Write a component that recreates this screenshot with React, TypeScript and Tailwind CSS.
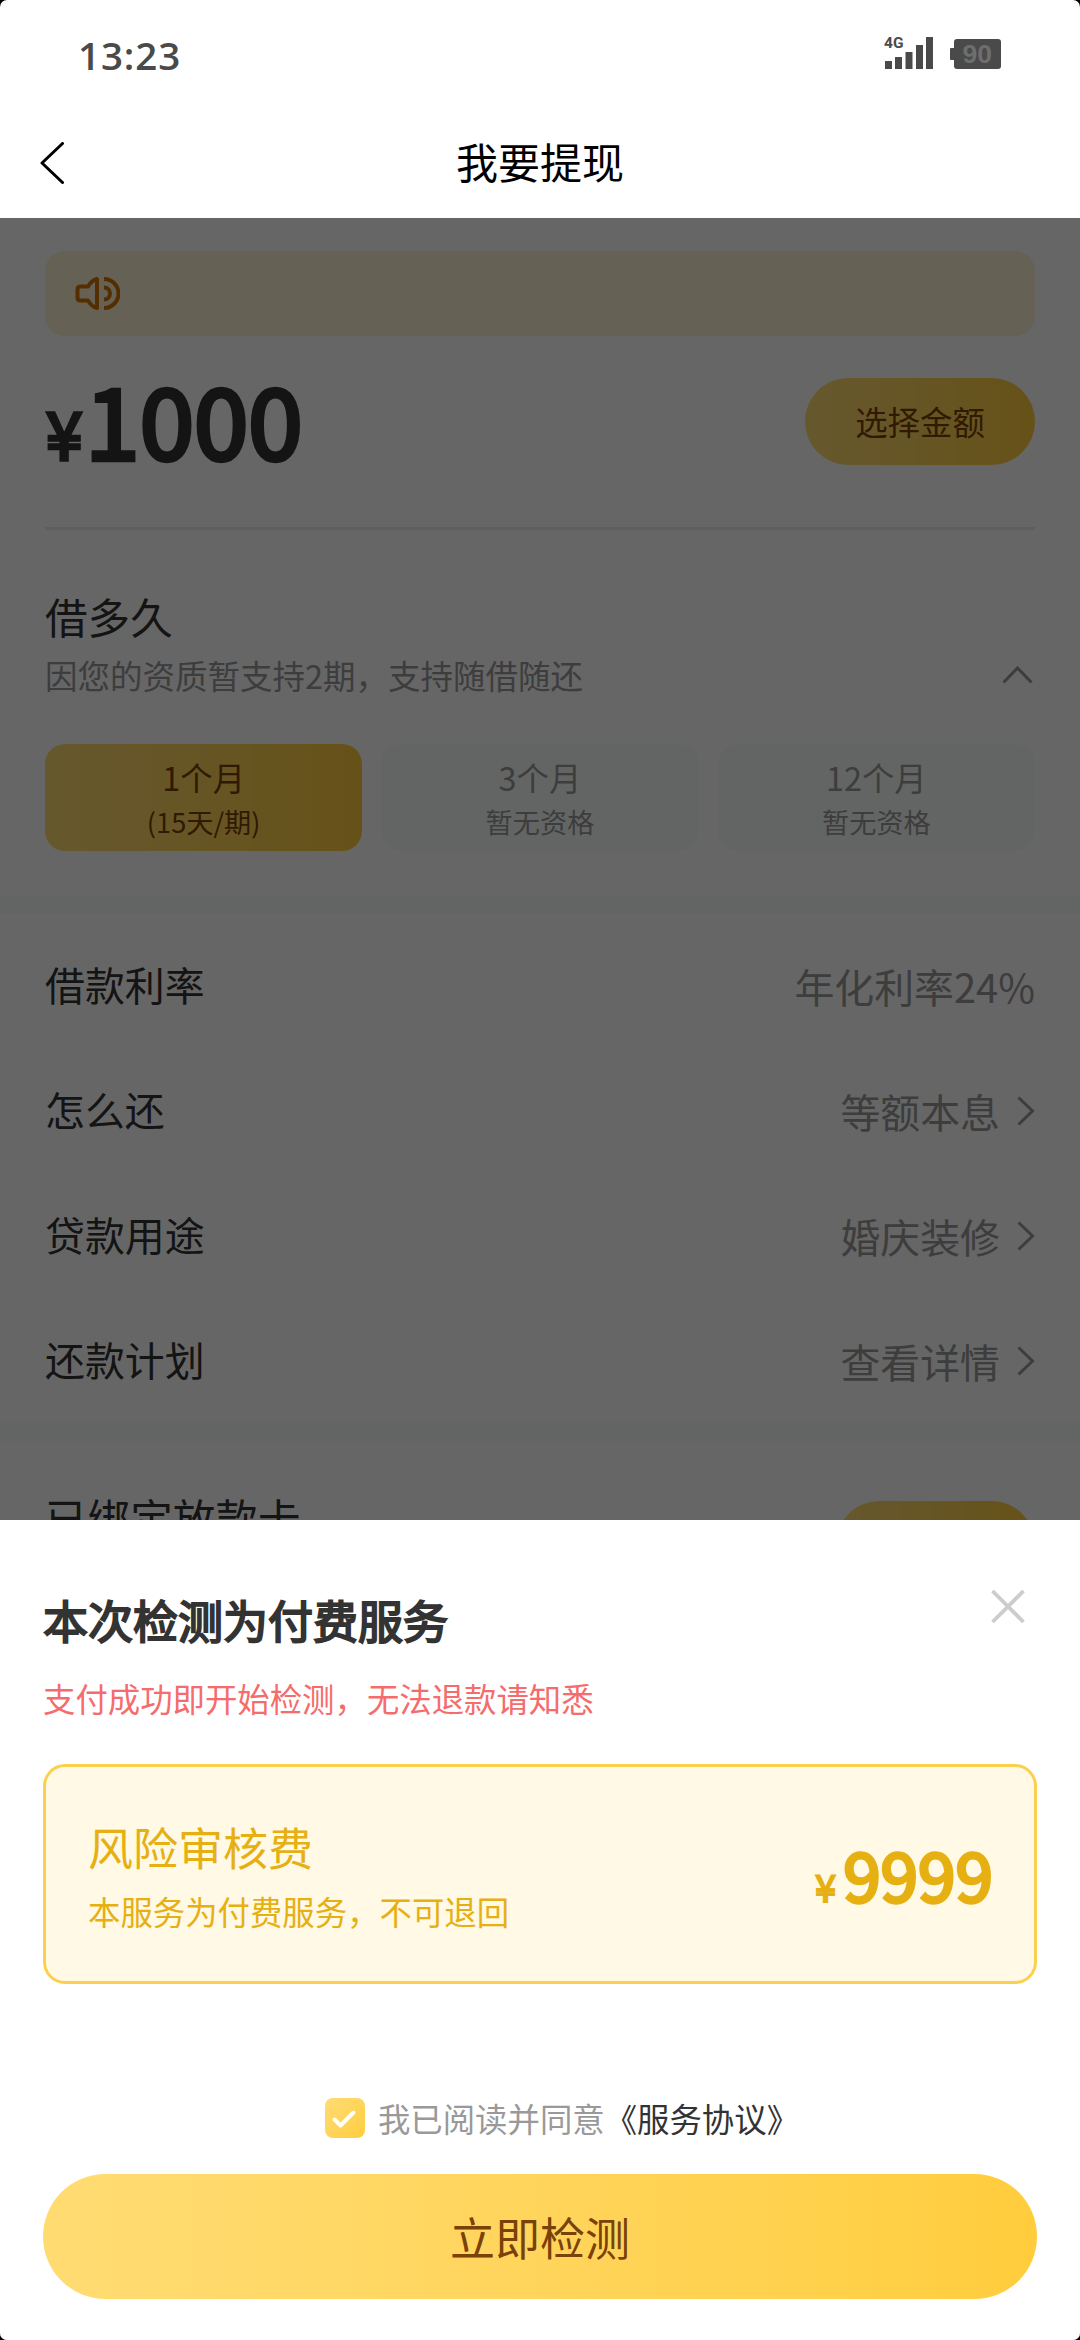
import { clsx } from "clsx";

const terms = [
  { title: "1个月", note: "(15天/期)", active: true },
  { title: "3个月", note: "暂无资格", active: false },
  { title: "12个月", note: "暂无资格", active: false },
];

const rows = [
  { label: "借款利率", value: "年化利率24%", link: false },
  { label: "怎么还", value: "等额本息", link: true },
  { label: "贷款用途", value: "婚庆装修", link: true },
  { label: "还款计划", value: "查看详情", link: true },
];

function StatusBar() {
  return (
    <div className="flex h-[108px] items-start justify-between pl-[78px] pr-[79px]">
      <span className="mt-[30px] font-['Open_Sans',sans-serif] text-[38.500px] font-semibold leading-[50px] tracking-[0.900px] text-[#4a4a4a]">
        13:23
      </span>
      <svg className="mt-[34px]" width="117" height="38" viewBox="0 0 117 38" fill="#4a4a4a">
        <text x="0" y="14" fontSize="15.500" fontWeight="700" fontFamily="Roboto, sans-serif">4G</text>
        <rect x="1" y="27" width="7" height="8" />
        <rect x="11" y="23" width="7" height="12" />
        <rect x="21.500" y="18" width="7" height="17" />
        <rect x="32" y="11" width="7" height="24" />
        <rect x="42" y="3" width="7" height="32" />
        <rect x="66" y="14" width="6" height="12" rx="1" />
        <rect x="70" y="5" width="47" height="30" rx="3" />
        <text x="78.500" y="29" fontSize="26.500" fontWeight="700" fill="#6e6e6e" fontFamily="Liberation Sans, sans-serif">90</text>
      </svg>
    </div>
  );
}

function NavBar() {
  return (
    <div className="flex h-[110px] items-center">
      <svg className="ml-10 w-6" width="24" height="42" viewBox="0 0 24 42" fill="none" stroke="#000" strokeWidth="3" strokeLinecap="round" strokeLinejoin="round">
        <path d="M22.500 1.500 2 21l20.500 19.500" />
      </svg>
      <h1 className="mr-16 flex-1 pb-[5px] text-center text-[42px] text-black">我要提现</h1>
    </div>
  );
}

function Chevron() {
  return (
    <svg width="18" height="30" viewBox="0 0 18 30" fill="none" stroke="#999" strokeWidth="3">
      <path d="M1.500 1.500 15.500 15l-14 13.500" />
    </svg>
  );
}

function LoanForm() {
  return (
    <>
      <div className="px-[45px] pt-[33px]">
        <div className="flex h-[85px] items-center rounded-[20px] bg-[#fff2d5] pl-[29px]">
          <svg width="46" height="36" viewBox="0 0 46 36" fill="none" stroke="#d27400" strokeWidth="4" strokeLinejoin="round">
            <path d="M23 3v29q-5-1-9-7.500H6.500q-3 0-3-3v-8q0-3 3-3H14Q18 4 23 3Z" />
            <path d="M30 3a14.500 14.500 0 0 1 0 29M30 11.500a6 6 0 0 1 0 12" />
          </svg>
        </div>

        <div className="mt-[42px] flex h-[87px] justify-between">
          <div className="flex items-baseline pl-px leading-[79px] text-[#333]">
            <span className="mr-[3px] text-[65.500px] [-webkit-text-stroke:3.500px_#333]">¥</span>
            <span className="text-[97.800px] [-webkit-text-stroke:4.500px_#333]">1000</span>
          </div>
          <button className="h-[87px] w-[230px] rounded-full bg-linear-to-r from-[#ffdc73] to-[#ffcd3c] text-[32.400px] text-[#7a4108]">
            选择金额
          </button>
        </div>

        <div className="mt-[62px] h-[3px] bg-[#ededed]" />

        <h2 className="mt-[56px] text-[42.600px] leading-[60px] text-[#333]">借多久</h2>
        <div className="mt-[5px] flex items-center justify-between text-[32.500px] leading-[48px] text-[#999]">
          <span>因您的资质暂支持2期，支持随借随还</span>
          <svg className="mr-[2px]" width="31" height="18" viewBox="0 0 31 18" fill="none" stroke="#999" strokeWidth="3">
            <path d="M1.500 16.500 15.500 2l14 14.500" />
          </svg>
        </div>

        <div className="mt-[45px] grid h-[107px] grid-cols-3 gap-[19px]">
          {terms.map((term) => (
            <div
              key={term.title}
              className={clsx(
                "flex flex-col items-center rounded-[20px] pt-[10px]",
                term.active
                  ? "bg-linear-to-r from-[#ffdc73] to-[#ffcd3c] text-[#7a4108]"
                  : "bg-[#f8fcfb] text-[#999]"
              )}
            >
              <span className="text-[32.400px] leading-[46px]">{term.title}</span>
              <span className="text-[27.200px] leading-[43px]">{term.note}</span>
            </div>
          ))}
        </div>
      </div>

      <div className="mt-[45px] h-[18px] bg-[#f8fcfb]" />

      <div className="px-[45px] pb-[2px] pt-[7px]">
        {rows.map((row) => (
          <div key={row.label} className="flex h-[125px] items-center justify-between text-[39.900px]">
            <span className="text-[#333]">{row.label}</span>
            <div className="flex items-center gap-[17px] pt-[5px] text-[#999]">
              <span>{row.value}</span>
              {row.link && <Chevron />}
            </div>
          </div>
        ))}
      </div>

      <div className="h-[18px] bg-[#f8fcfb]" />

      <div className="flex items-start justify-between px-[45px] pt-[60px]">
        <h2 className="-mt-[14px] text-[42.600px] leading-[60px] text-[#333]">已绑定放款卡</h2>
        <div className="h-[87px] w-[199px] rounded-full bg-linear-to-r from-[#ffdc73] to-[#ffcd3c]" />
      </div>
    </>
  );
}

function PaySheet() {
  return (
    <div className="absolute inset-x-0 bottom-0 h-[820px] bg-white px-[43px] pt-[66px]">
      <div className="flex items-start justify-between">
        <h2 className="text-[45px] leading-[67px] text-[#333] [-webkit-text-stroke:2px_#333]">本次检测为付费服务</h2>
        <svg className="mr-[12px] mt-[3px]" width="34" height="35" viewBox="0 0 34 35" stroke="#ccc" strokeWidth="3.800">
          <path d="m1.500 2 31 31M32.500 2l-31 31" />
        </svg>
      </div>
      <p className="mt-[21px] text-[32.400px] leading-[48px] text-[#f56c6c]">支付成功即开始检测，无法退款请知悉</p>

      <div className="mt-[42px] flex h-[220px] items-center justify-between rounded-[22px] border-[3px] border-[#fcd04f] bg-[#fff9e6] px-[42px] text-[#e6b012]">
        <div className="pt-[7px]">
          <div className="text-[45px] leading-[66px]">风险审核费</div>
          <div className="text-[32.400px] leading-[62px]">本服务为付费服务，不可退回</div>
        </div>
        <div className="-mr-px flex items-baseline pb-[2px]">
          <span className="mr-[7px] text-[38px] [-webkit-text-stroke:1.800px_#e6b012]">¥</span>
          <span className="text-[67.500px] [-webkit-text-stroke:3.300px_#e6b012]">9999</span>
        </div>
      </div>

      <div className="mt-[110px] flex h-12 items-center justify-center pl-[44px] text-[32.400px]">
        <div className="mr-[13px] size-10 rounded-[8px] bg-linear-to-br from-[#ffdc73] to-[#ffcd3c]">
          <svg width="40" height="40" viewBox="0 0 40 40" fill="none" stroke="#fff" strokeWidth="4" strokeLinecap="round" strokeLinejoin="round">
            <path d="m9.500 21.500 6 6 13-13" />
          </svg>
        </div>
        <span className="text-[#999]">我已阅读并同意</span>
        <span className="text-[#333]">《服务协议》</span>
      </div>

      <button className="mt-[32px] h-[125px] w-full rounded-full bg-linear-to-r from-[#ffdc73] to-[#ffcd3c] text-[45px] text-[#7a4108]">
        立即检测
      </button>
    </div>
  );
}

function App() {
  return (
    <div className="h-[2340px] w-[1080px] bg-black">
      <div className="relative h-full overflow-hidden rounded-[7px] bg-white font-['Noto_Sans_CJK_SC',sans-serif]">
        <StatusBar />
        <NavBar />
        <LoanForm />
        <div className="absolute inset-x-0 bottom-0 top-[218px] bg-black/60" />
        <PaySheet />
      </div>
    </div>
  );
}

export default App;
